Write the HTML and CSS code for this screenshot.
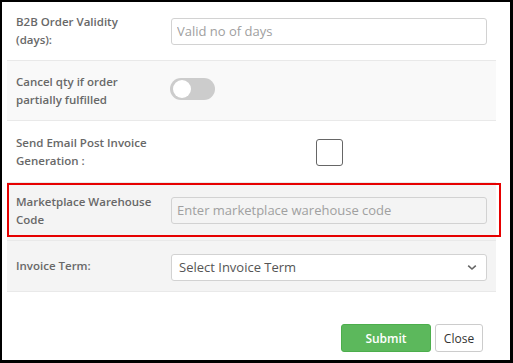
FILE: index.html
```html
<!DOCTYPE html>
<html lang="en">
<head>
  <meta charset="UTF-8">
  <title>Order Settings</title>
  <meta name="viewport" content="width=device-width, initial-scale=1.0">
  <link rel="stylesheet" href="styles.css">
</head>
<body>

  <div id="modal">
    <div class="rows">
      <div class="row row-one">
        <label class="label" for="validity">B2B Order Validity<br>(days):</label>
        <div class="field"><input type="text" id="validity" class="control" placeholder="Valid no of days"></div>
      </div>
      <div class="row row-two shade-light">
        <label class="label">Cancel qty if order<br>partially fulfilled</label>
        <div class="field"><span class="toggle"><span class="knob"></span></span></div>
      </div>
      <div class="row row-three">
        <label class="label">Send Email Post Invoice<br>Generation :</label>
        <div class="field field-center"><span class="check"></span></div>
      </div>
      <div class="row row-four shade">
        <label class="label" for="whcode">Marketplace Warehouse<br>Code</label>
        <div class="field"><input type="text" id="whcode" class="control" placeholder="Enter marketplace warehouse code"></div>
        <span class="highlight"></span>
      </div>
      <div class="row row-five shade">
        <label class="label" for="term">Invoice Term:</label>
        <div class="field">
          <div class="select">
            <span>Select Invoice Term</span>
            <svg width="10" height="7" viewBox="0 0 10 7"><path d="M1.2 1.6 L5 5 L8.8 1.6" fill="none" stroke="#666" stroke-width="1.6"/></svg>
          </div>
        </div>
      </div>
    </div>

    <div class="buttons">
      <button class="btn btn-submit">Submit</button>
      <button class="btn btn-close">Close</button>
    </div>
  </div>

</body>
</html>
```

FILE: styles.css
```css
html, body {
  margin: 0;
  padding: 0;
  overflow: hidden;
}
body {
  font-family: "Open Sans", "Liberation Sans", sans-serif;
  background: #fff;
}
#modal {
  box-sizing: border-box;
  width: 513px;
  height: 363px;
  border-style: solid;
  border-color: #000;
  border-width: 2px 3px 3px 2px;
  padding: 0 14px 0 5px;
  background: #fff;
}
.rows {
  width: 489px;
}
.row {
  position: relative;
  display: grid;
  grid-template-columns: 164px 316px;
  align-items: center;
  box-sizing: border-box;
  border-bottom: 1px solid #e9e9e9;
}
.row-one { height: 59px; }
.row-two { height: 60px; }
.row-three { height: 62px; }
.row-four { height: 58px; }
.row-five { height: 51px; }
.shade-light { background: #f9f9f9; }
.shade { background: #f4f4f4; }
.label {
  padding-left: 9px;
  font-size: 11.5px;
  font-weight: 600;
  line-height: 18px;
  color: #686868;
}
.row-four .label { margin-top: -2px; }
.field {
  display: flex;
  align-items: center;
}
.field-center {
  justify-content: center;
}
.control {
  box-sizing: border-box;
  width: 316px;
  height: 27px;
  padding: 0 5px;
  border: 1px solid #d2d2d2;
  border-radius: 3px;
  background: #fff;
  font-family: inherit;
  font-size: 13px;
  color: #555;
  outline: none;
}
.row-four .control {
  background: #f4f4f4;
  margin-top: -3px;
}
.control::placeholder {
  color: #a0a0a0;
}
.toggle {
  display: block;
  width: 45px;
  height: 22px;
  margin-top: -3px;
  margin-left: -1px;
  border-radius: 11px;
  background: #ccc;
  position: relative;
}
.knob {
  position: absolute;
  left: 3px;
  top: 2px;
  width: 18px;
  height: 18px;
  border-radius: 50%;
  background: #fff;
}
.check {
  display: block;
  box-sizing: border-box;
  width: 27px;
  height: 27px;
  margin-top: 2px;
  border: 1px solid #666;
  border-radius: 3px;
  background: #fff;
}
.highlight {
  position: absolute;
  left: 0;
  top: 0;
  right: -5px;
  bottom: 3px;
  border: 2px solid #e60000;
}
.select {
  box-sizing: border-box;
  width: 316px;
  height: 27px;
  margin-top: 2px;
  padding: 0 9px 0 7px;
  display: flex;
  align-items: center;
  justify-content: space-between;
  border: 1px solid #d2d2d2;
  border-radius: 3px;
  background: #fff;
  font-size: 13px;
  color: #555;
}
.buttons {
  display: flex;
  justify-content: flex-end;
  gap: 4px;
  padding: 32px 13px 0 0;
}
.btn {
  box-sizing: border-box;
  height: 28px;
  border-radius: 3px;
  font-family: inherit;
  font-size: 12px;
  cursor: pointer;
}
.btn-submit {
  width: 90px;
  border: 1px solid #4cae4c;
  background: #5cb85c;
  color: #fff;
  font-weight: 600;
}
.btn-close {
  width: 48px;
  border: 1px solid #ccc;
  background: #fff;
  color: #333;
}
```
